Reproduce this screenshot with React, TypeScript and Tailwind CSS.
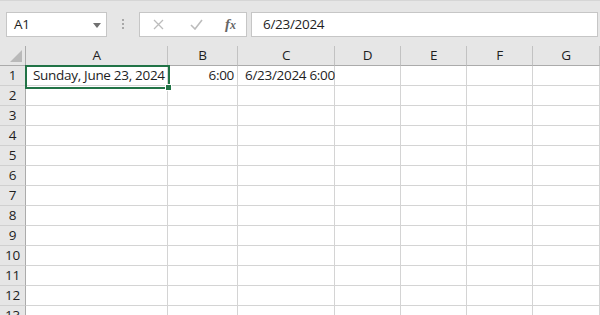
import { ReactNode } from "react";

const cols = [
  { name: "A", w: "w-[142px]" },
  { name: "B", w: "w-[70px]" },
  { name: "C", w: "w-[97px]" },
  { name: "D", w: "w-[66px]" },
  { name: "E", w: "w-[66px]" },
  { name: "F", w: "w-[66px]" },
  { name: "G", w: "w-[67px]" },
];

const rowData: Record<number, ReactNode[]> = {
  1: ["Sunday, June 23, 2024", "6:00", "6/23/2024 6:00"],
};

function Cell({ w, children, align }: { w: string; children?: ReactNode; align?: string }) {
  return (
    <div
      className={`${w} h-full shrink-0 border-r border-b border-[#d4d4d4] bg-white pl-[7px] pr-[3px] flex items-center overflow-visible whitespace-nowrap ${align ?? ""}`}
    >
      {children}
    </div>
  );
}

export default function App() {
  const rows = Array.from({ length: 13 }, (_, i) => i + 1);

  return (
    <div
      className="relative w-[600px] h-[315px] overflow-hidden bg-[#e6e6e6] text-[13.5px] tracking-[-0.3px] text-[#1e1e1e]"
      style={{ fontFamily: '"Open Sans", "Noto Sans", sans-serif' }}
    >
      {/* formula bar */}
      <div className="flex items-center h-[46px] pl-[6px] pr-[2px] pt-[1px] border-t border-[#d6d6d6]">
        <div className="relative w-[101px] h-[25px] bg-white border border-[#c6c6c6] flex items-center pl-[7px]">
          A1
          <svg className="absolute right-[5px] top-[10px]" width="8" height="5" viewBox="0 0 8 5">
            <path d="M0 0H8L4 5Z" fill="#707070" />
          </svg>
        </div>
        <div className="w-[32px] flex flex-col items-center gap-[2px]">
          <span className="w-[2px] h-[2px] bg-[#a8a8a8]" />
          <span className="w-[2px] h-[2px] bg-[#a8a8a8]" />
          <span className="w-[2px] h-[2px] bg-[#a8a8a8]" />
        </div>
        <div className="w-[108px] h-[25px] bg-white border border-[#c6c6c6] flex items-center">
          <svg className="ml-[13px]" width="11" height="11" viewBox="0 0 11 11">
            <path d="M1 1L10 10M10 1L1 10" stroke="#bcbcbc" strokeWidth="1.3" />
          </svg>
          <svg className="ml-[26px]" width="13" height="11" viewBox="0 0 13 11">
            <path d="M1 6L5 10L12 1" stroke="#bcbcbc" strokeWidth="1.6" fill="none" />
          </svg>
          <span
            className="ml-[22px] italic font-bold text-[15px] tracking-normal text-[#666]"
            style={{ fontFamily: '"Liberation Serif", serif' }}
          >
            f<span className="text-[12px]">x</span>
          </span>
        </div>
        <div className="ml-[4px] flex-1 h-[25px] bg-white border border-[#c6c6c6] flex items-center pl-[11px]">
          6/23/2024
        </div>
      </div>

      {/* column headers */}
      <div className="flex h-[20px]">
        <div className="relative w-[26px] shrink-0 border-r border-b border-[#ababab] bg-[#e6e6e6]">
          <svg className="absolute right-[3px] bottom-[3px]" width="12" height="12" viewBox="0 0 12 12">
            <path d="M12 0V12H0Z" fill="#b9b9b9" />
          </svg>
        </div>
        {cols.map((c) => (
          <div
            key={c.name}
            className={`${c.w} shrink-0 flex items-center justify-center border-r border-b border-r-[#c2c2c2] border-b-[#ababab] bg-[#e6e6e6]`}
          >
            {c.name}
          </div>
        ))}
      </div>

      {/* rows */}
      {rows.map((r) => {
        const data = rowData[r] ?? [];
        return (
          <div key={r} className="flex h-[20px]">
            <div className="w-[26px] shrink-0 flex items-center justify-center border-r border-b border-r-[#ababab] border-b-[#d0d0d0] bg-[#e6e6e6]">
              {r}
            </div>
            {cols.map((c, i) => (
              <Cell key={c.name} w={c.w} align={i === 1 ? "justify-end" : ""}>
                {data[i]}
              </Cell>
            ))}
          </div>
        );
      })}

      {/* selection on A1 */}
      <div className="absolute left-[25px] top-[65px] w-[145px] h-[24px] border-2 border-[#217346] pointer-events-none" />
      <div className="absolute left-[165px] top-[84px] w-[7px] h-[7px] bg-[#217346] border border-white pointer-events-none" />
    </div>
  );
}
